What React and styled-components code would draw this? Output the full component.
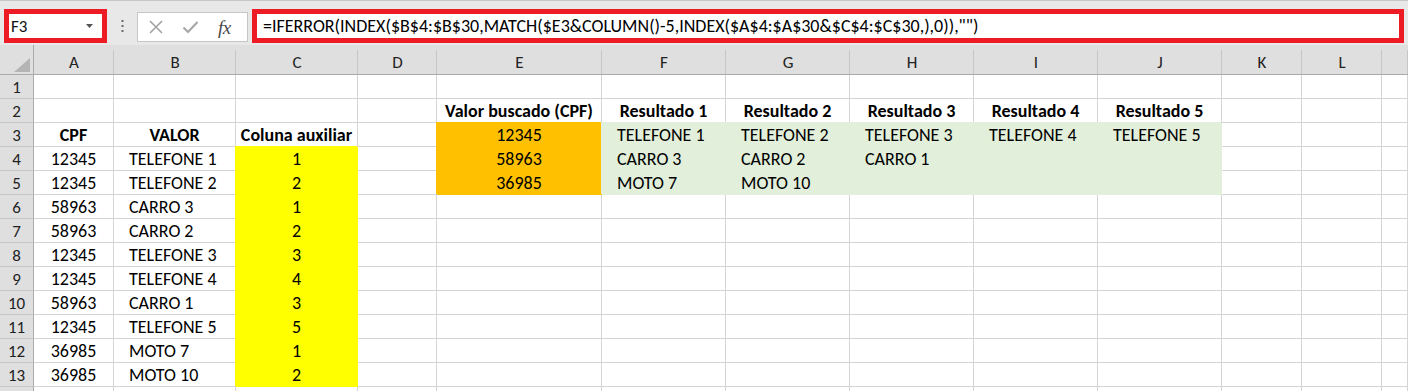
import React from "react";
import styled, { createGlobalStyle } from "styled-components";

const FONT = `Carlito, Calibri, Lato, "Noto Sans", sans-serif`;
const GRID = "#d4d4d4";

const GlobalStyle = createGlobalStyle`
  html, body { margin: 0; padding: 0; background: #ffffff; }
  body { font-family: ${FONT}; color: #000; }
`;

const Page = styled.div`
  width: 1408px;
  height: 391px;
  overflow: hidden;
  background: #fff;
`;

/* ---------- formula bar ---------- */
const Bar = styled.div`
  display: flex;
  align-items: flex-start;
  height: 45px;
  box-sizing: border-box;
  border-top: 1px solid #c6c6c6;
  background: #e8e8e8;
  padding: 8px 4px 0 4px;
`;

const NameBox = styled.div`
  width: 103px;
  height: 34px;
  box-sizing: border-box;
  border: 5px solid #ed1c24;
  background: #fff;
  display: flex;
  align-items: center;
  justify-content: space-between;
  padding: 0 9px 0 2px;
  font-size: 17px;
  color: #111;
`;

const Dots = styled.svg`
  margin: 11px 0 0 14px;
  flex: none;
`;

const FuncBox = styled.div`
  width: 111px;
  height: 30px;
  margin: 3px 0 0 13px;
  box-sizing: border-box;
  border: 1px solid #c6c6c6;
  background: #fff;
  display: flex;
  align-items: center;
  gap: 18px;
  padding: 0 0 0 10px;
`;

const FxGlyph = styled.span`
  font-family: "Liberation Serif", "DejaVu Serif", serif;
  font-style: italic;
  font-size: 19px;
  color: #4a4a4a;
  letter-spacing: -0.5px;
  line-height: 1;
  margin-left: 1px;
`;

const FormulaBox = styled.div`
  flex: 1;
  height: 34px;
  margin-left: 4px;
  box-sizing: border-box;
  border: 5px solid #ed1c24;
  background: #fff;
  display: flex;
  align-items: center;
  padding-left: 6px;
  font-size: 18px;
  white-space: nowrap;
  overflow: hidden;
`;

/* ---------- sheet ---------- */
const COL_WIDTHS = [80, 122, 122, 79, 165, 124, 124, 124, 124, 124, 80, 80, 26];
const LETTERS = ["A", "B", "C", "D", "E", "F", "G", "H", "I", "J", "K", "L", ""];

const Sheet = styled.div`
  display: grid;
  grid-template-columns: 34px ${COL_WIDTHS.map((w) => `${w}px`).join(" ")};
  grid-template-rows: 30px repeat(14, 24px);
`;

const Corner = styled.div`
  background: #dfdfdf;
  border-right: 1px solid #ababab;
  border-bottom: 1px solid #ababab;
  display: flex;
  align-items: flex-end;
  justify-content: flex-end;
  padding: 0 3px 2px 0;
  box-sizing: border-box;
`;

const ColHead = styled.div`
  box-sizing: border-box;
  background:
    linear-gradient(#c6c6c6, #c6c6c6) right 5px / 1px calc(100% - 5px) no-repeat,
    #dfdfdf;
  border-bottom: 1px solid #ababab;
  display: flex;
  justify-content: center;
  align-items: center;
  padding-top: 5px;
  font-size: 17px;
  color: #222;
`;

const RowHead = styled.div`
  box-sizing: border-box;
  background: #dfdfdf;
  border-right: 1px solid #ababab;
  border-bottom: 1px solid #c6c6c6;
  display: flex;
  justify-content: center;
  align-items: center;
  padding-top: 2px;
  font-size: 17px;
  color: #222;
`;

const Cell = styled.div`
  box-sizing: border-box;
  border-right: 1px solid ${(p) => p.$fill || GRID};
  border-bottom: 1px solid ${(p) => p.$fill || GRID};
  background: ${(p) => p.$fill || "#fff"};
  box-shadow: ${(p) => (p.$fill ? `-1px -1px 0 0 ${p.$fill}` : "none")};
  display: flex;
  align-items: center;
  justify-content: ${(p) => (p.$align === "left" ? "flex-start" : "center")};
  padding: 1px 0 0 ${(p) => (p.$align === "left" ? "15px" : "0")};
  font-size: 18px;
  font-weight: ${(p) => (p.$bold ? 700 : 400)};
  white-space: nowrap;
`;

const YELLOW = "#ffff00";
const ORANGE = "#ffc000";
const GREEN = "#e2efda";

const c = (text, opts = {}) => ({ text, ...opts });
const H = (t) => c(t, { bold: true });
const L = (t, fill) => c(t, { align: "left", fill });

const rows = [
  [],
  [null, null, null, null, H("Valor buscado (CPF)"), H("Resultado 1"), H("Resultado 2"), H("Resultado 3"), H("Resultado 4"), H("Resultado 5")],
  [H("CPF"), H("VALOR"), H("Coluna auxiliar"), null, c("12345", { fill: ORANGE }), L("TELEFONE 1", GREEN), L("TELEFONE 2", GREEN), L("TELEFONE 3", GREEN), L("TELEFONE 4", GREEN), L("TELEFONE 5", GREEN)],
  [c("12345"), L("TELEFONE 1"), c("1", { fill: YELLOW }), null, c("58963", { fill: ORANGE }), L("CARRO 3", GREEN), L("CARRO 2", GREEN), L("CARRO 1", GREEN), L("", GREEN), L("", GREEN)],
  [c("12345"), L("TELEFONE 2"), c("2", { fill: YELLOW }), null, c("36985", { fill: ORANGE }), L("MOTO 7", GREEN), L("MOTO 10", GREEN), L("", GREEN), L("", GREEN), L("", GREEN)],
  [c("58963"), L("CARRO 3"), c("1", { fill: YELLOW })],
  [c("58963"), L("CARRO 2"), c("2", { fill: YELLOW })],
  [c("12345"), L("TELEFONE 3"), c("3", { fill: YELLOW })],
  [c("12345"), L("TELEFONE 4"), c("4", { fill: YELLOW })],
  [c("58963"), L("CARRO 1"), c("3", { fill: YELLOW })],
  [c("12345"), L("TELEFONE 5"), c("5", { fill: YELLOW })],
  [c("36985"), L("MOTO 7"), c("1", { fill: YELLOW })],
  [c("36985"), L("MOTO 10"), c("2", { fill: YELLOW })],
];

const FORMULA = '=IFERROR(INDEX($B$4:$B$30,MATCH($E3&COLUMN()-5,INDEX($A$4:$A$30&$C$4:$C$30,),0)),"")';

export default function App() {
  return (
    <Page>
      <GlobalStyle />
      <Bar>
        <NameBox>
          <span>F3</span>
          <svg width="7" height="4" viewBox="0 0 7 4">
            <path d="M0 0 H7 L3.5 4 Z" fill="#555" />
          </svg>
        </NameBox>
        <Dots width="3" height="12" viewBox="0 0 3 12">
          <rect x="0.5" y="0" width="2" height="2" fill="#6a6a6a" />
          <rect x="0.5" y="5" width="2" height="2" fill="#6a6a6a" />
          <rect x="0.5" y="10" width="2" height="2" fill="#6a6a6a" />
        </Dots>
        <FuncBox>
          <svg width="16" height="14" viewBox="0 0 16 14">
            <path d="M2 1 L14 13 M14 1 L2 13" stroke="#a3a3a3" strokeWidth="1.6" fill="none" />
          </svg>
          <svg width="17" height="14" viewBox="0 0 17 14">
            <path d="M1.5 7.5 L6 12 L15.5 2" stroke="#a8a8a8" strokeWidth="2.2" fill="none" />
          </svg>
          <FxGlyph>fx</FxGlyph>
        </FuncBox>
        <FormulaBox>{FORMULA}</FormulaBox>
      </Bar>
      <Sheet>
        <Corner>
          <svg width="16" height="14" viewBox="0 0 16 14">
            <path d="M16 0 V14 H0 Z" fill="#b4b4b4" />
          </svg>
        </Corner>
        {LETTERS.map((l, i) => (
          <ColHead key={i}>{l}</ColHead>
        ))}
        {[...rows, []].map((r, ri) => (
          <React.Fragment key={ri}>
            <RowHead>{ri < rows.length ? ri + 1 : ""}</RowHead>
            {LETTERS.map((l, ci) => {
              const cell = r[ci];
              return (
                <Cell
                  key={ci}
                  $fill={cell?.fill}
                  $align={cell?.align}
                  $bold={cell?.bold}
                >
                  {cell?.text}
                </Cell>
              );
            })}
          </React.Fragment>
        ))}
      </Sheet>
    </Page>
  );
}
